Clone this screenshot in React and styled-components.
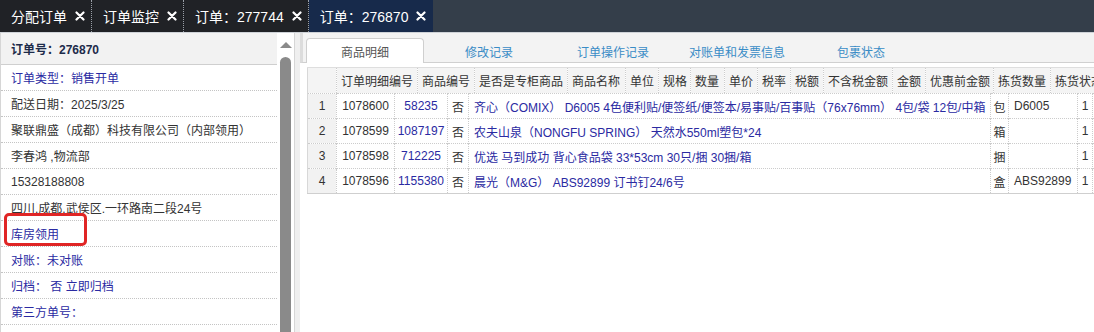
import React from 'react';
import styled, { createGlobalStyle } from 'styled-components';

const GlobalStyle = createGlobalStyle`
  html, body {
    margin: 0;
    padding: 0;
    overflow: hidden;
    background: #fff;
  }
  body {
    font-family: "Liberation Sans", "Noto Sans CJK SC", sans-serif;
    font-size: 12px;
    color: #333;
  }
`;

const Page = styled.div`
  width: 1094px;
  height: 332px;
  display: flex;
  flex-direction: column;
  overflow: hidden;
`;

/* ---------- top tab bar ---------- */
const TopBar = styled.div`
  height: 32px;
  flex-shrink: 0;
  display: flex;
  background: #343e4a;
  border-bottom: 1px solid #cfd3d8;
`;
const TopTab = styled.div`
  display: flex;
  align-items: center;
  gap: 8px;
  padding: 0 6px 0 11px;
  color: #fff;
  font-size: 14px;
  white-space: nowrap;
  background: ${({ active }) => (active ? '#172a4b' : '#202226')};
  border-right: 1px dotted ${({ active }) => (active ? 'transparent' : '#9aa0a8')};
`;
const CloseIcon = () => (
  <svg width="10" height="10" viewBox="0 0 10 10">
    <path d="M1.5 1.5L8.5 8.5M8.5 1.5L1.5 8.5" stroke="#fff" strokeWidth="2.2" strokeLinecap="round" />
  </svg>
);

/* ---------- body ---------- */
const Main = styled.div`
  flex: 1;
  display: flex;
  min-height: 0;
`;

const LeftPanel = styled.div`
  position: relative;
  width: 295px;
  flex-shrink: 0;
  display: flex;
  border-left: 1px solid #d6d6d6;
  border-right: 1px solid #d6d6d6;
  box-sizing: border-box;
`;
const InfoList = styled.div`
  width: 276px;
  display: flex;
  flex-direction: column;
`;
const InfoHeader = styled.div`
  height: 31px;
  flex-shrink: 0;
  display: flex;
  align-items: center;
  padding-left: 10px;
  background: #f2f2f2;
  border-bottom: 1px solid #cfcfcf;
  font-weight: bold;
  color: #1d2b4a;
`;
const InfoRow = styled.div`
  height: 25px;
  flex-shrink: 0;
  display: flex;
  align-items: center;
  padding-left: 10px;
  border-bottom: 1px dotted #c4c4c4;
  white-space: nowrap;
  color: ${({ link }) => (link ? '#2a2aa2' : '#333')};
`;
const ScrollTrack = styled.div`
  width: 17px;
  display: flex;
  flex-direction: column;
  align-items: center;
  background: #fff;
`;
const ArrowUp = styled.div`
  margin-top: 9px;
  width: 0;
  height: 0;
  border-left: 6px solid transparent;
  border-right: 6px solid transparent;
  border-bottom: 6px solid #8a8a8a;
`;
const Thumb = styled.div`
  margin-top: 9px;
  width: 11px;
  flex: 1;
  background: #8a8a8a;
  border-radius: 6px 6px 0 0;
`;
const Annotation = styled.div`
  position: absolute;
  left: 3px;
  top: 180px;
  width: 77px;
  height: 27px;
  border: 3px solid #e02525;
  border-radius: 5px;
`;

const Splitter = styled.div`
  width: 5px;
  flex-shrink: 0;
  background: #efefef;
`;

const RightPanel = styled.div`
  flex: 1;
  min-width: 0;
  display: flex;
  flex-direction: column;
  overflow: hidden;
  background: #fff;
`;
const SubTabs = styled.div`
  height: 29px;
  flex-shrink: 0;
  display: flex;
  align-items: flex-end;
  gap: 6px;
  padding-left: 3px;
  background: #f3f3f3;
  border-bottom: 1px solid #d0d0d0;
  border-left: 3px solid #dcdcdc;
`;
const SubTab = styled.div`
  width: 118px;
  height: 25px;
  box-sizing: border-box;
  display: flex;
  align-items: center;
  justify-content: center;
  margin-bottom: -1px;
  font-size: 12px;
  color: ${({ active }) => (active ? '#555' : '#3a8cc6')};
  background: ${({ active }) => (active ? '#fff' : 'transparent')};
  border: 1px solid ${({ active }) => (active ? '#cfcfcf' : 'transparent')};
  border-bottom: none;
  border-radius: 4px 4px 0 0;
`;

const GridWrap = styled.div`
  padding: 4px 0 0 7px;
  overflow: hidden;
`;
const Table = styled.table`
  border-collapse: collapse;
  table-layout: fixed;
  white-space: nowrap;
  border-left: 1px solid #d8d8d8;
  ${({ body }) => body && 'border-bottom: 1px solid #cfcfcf;'}
`;
const HeadCell = styled.th`
  height: 25px;
  padding: 0 4px;
  font-weight: normal;
  color: #333;
  text-align: left;
  background: #f4f4f4;
  border-top: 1px solid #dedede;
  border-right: 1px dotted #cccccc;
  overflow: hidden;
`;
const Cell = styled.td`
  height: 24px;
  padding: 0 ${({ align }) => (align === 'left' ? '5px' : '0')};
  text-align: ${({ align }) => align || 'center'};
  color: ${({ link }) => (link ? '#2a2aa2' : '#333')};
  background: ${({ num }) => (num ? '#f2f2f2' : '#fff')};
  border-top: 1px dotted #cccccc;
  border-right: 1px dotted #cccccc;
  overflow: hidden;
`;

const headCols = [
  ['', 29], ['订单明细编号', 81], ['商品编号', 57], ['是否是专柜商品', 93], ['商品名称', 58],
  ['单位', 33], ['规格', 32], ['数量', 34], ['单价', 33], ['税率', 33], ['税额', 33],
  ['不含税金额', 69], ['金额', 33], ['优惠前金额', 68], ['拣货数量', 57], ['拣货状态', 70],
];
const bodyCols = [29, 58, 53, 21, 522, 18, 69, 15, 40];

const rows = [
  ['1078600', '58235', '齐心（COMIX） D6005 4色便利贴/便签纸/便签本/易事贴/百事贴（76x76mm） 4包/袋 12包/中箱', '包', 'D6005'],
  ['1078599', '1087197', '农夫山泉（NONGFU SPRING） 天然水550ml塑包*24', '箱', ''],
  ['1078598', '712225', '优选 马到成功 背心食品袋 33*53cm 30只/捆 30捆/箱', '捆', ''],
  ['1078596', '1155380', '晨光（M&G） ABS92899 订书钉24/6号', '盒', 'ABS92899'],
];

const info = [
  ['订单类型：销售开单', true],
  ['配送日期：2025/3/25', false],
  ['聚联鼎盛（成都）科技有限公司（内部领用）', false],
  ['李春鸿 ,物流部', false],
  ['15328188808', false],
  ['四川.成都.武侯区.一环路南二段24号', false],
  ['库房领用', true],
  ['对账：未对账', true],
  ['归档： 否 立即归档', true],
  ['第三方单号：', true],
];

export default function App() {
  return (
    <Page>
      <GlobalStyle />
      <TopBar>
        <TopTab>分配订单<CloseIcon /></TopTab>
        <TopTab>订单监控<CloseIcon /></TopTab>
        <TopTab>订单：277744<CloseIcon /></TopTab>
        <TopTab active>订单：276870<CloseIcon /></TopTab>
      </TopBar>
      <Main>
        <LeftPanel>
          <InfoList>
            <InfoHeader>订单号：276870</InfoHeader>
            {info.map(([text, link]) => (
              <InfoRow key={text} link={link}>{text}</InfoRow>
            ))}
          </InfoList>
          <ScrollTrack>
            <ArrowUp />
            <Thumb />
          </ScrollTrack>
          <Annotation />
        </LeftPanel>
        <Splitter />
        <RightPanel>
          <SubTabs>
            <SubTab active>商品明细</SubTab>
            <SubTab>修改记录</SubTab>
            <SubTab>订单操作记录</SubTab>
            <SubTab>对账单和发票信息</SubTab>
            <SubTab>包裹状态</SubTab>
          </SubTabs>
          <GridWrap>
            <Table style={{ width: 813 }}>
              <colgroup>
                {headCols.map(([, w], i) => <col key={i} style={{ width: w }} />)}
              </colgroup>
              <thead>
                <tr>
                  {headCols.map(([t], i) => <HeadCell key={i}>{t}</HeadCell>)}
                </tr>
              </thead>
            </Table>
            <Table body style={{ width: 825 }}>
              <colgroup>
                {bodyCols.map((w, i) => <col key={i} style={{ width: w }} />)}
              </colgroup>
              <tbody>
                {rows.map(([id, code, name, unit, sku], i) => (
                  <tr key={id}>
                    <Cell num>{i + 1}</Cell>
                    <Cell>{id}</Cell>
                    <Cell link>{code}</Cell>
                    <Cell>否</Cell>
                    <Cell link align="left">{name}</Cell>
                    <Cell>{unit}</Cell>
                    <Cell align="left">{sku}</Cell>
                    <Cell>1</Cell>
                    <Cell />
                  </tr>
                ))}
              </tbody>
            </Table>
          </GridWrap>
        </RightPanel>
      </Main>
    </Page>
  );
}
